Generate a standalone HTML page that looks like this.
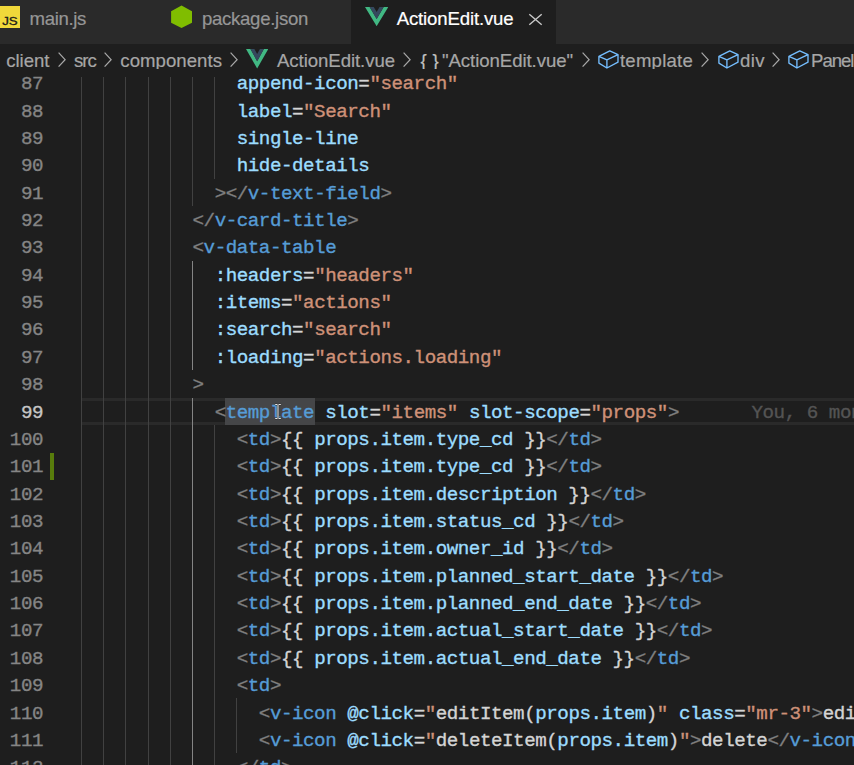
<!DOCTYPE html>
<html><head><meta charset="utf-8"><title>ActionEdit.vue</title>
<style>
html,body{margin:0;padding:0;background:#1e1e1e;}
body{width:854px;height:765px;overflow:hidden;position:relative;font-family:"Liberation Sans",sans-serif;}
#tabs{position:absolute;left:0;top:0;width:854px;height:43.6px;background:#2a2a2a;}
.tab{position:absolute;top:0;height:43.6px;background:#2a2a2a;color:#969696;font-size:18.6px;white-space:nowrap;}
.tab.active{background:#1e1e1e;color:#ffffff;}
.u{position:absolute;white-space:pre;-webkit-text-stroke:0.2px;font-size:18.6px;line-height:24px;height:24px;}
#crumbs{position:absolute;left:0;top:43px;width:854px;height:26px;background:#1e1e1e;color:#a9a9a9;white-space:nowrap;overflow:hidden;}
#code{position:absolute;left:0;top:0;width:854px;height:765px;font-family:"Liberation Mono",monospace;font-size:19.2px;overflow:hidden;-webkit-text-stroke:0.35px;}
.ln{position:absolute;left:0;width:43px;text-align:right;color:#858585;height:27.36px;line-height:27.36px;white-space:pre;letter-spacing:-0.462px;}
.ln.cur{color:#c6c6c6;}
.cl{position:absolute;left:82px;height:27.36px;line-height:27.36px;white-space:pre;color:#d4d4d4;letter-spacing:-0.462px;}
.g{position:absolute;width:1.2px;background:#414141;}
.g.act{background:#848484;}
.p{color:#808080}.t{color:#569cd6}.a{color:#9cdcfe}.s{color:#ce9178}.x{color:#d4d4d4}.e{color:#d4d4d4}
</style></head><body>
<div id="tabs">
<div class="tab" style="left:0;width:136px;"></div><div class="tab" style="left:137px;width:214px;"></div><div class="tab active" style="left:351px;width:205px;"></div>
<svg style="position:absolute;left:0;top:6px" width="20" height="22" viewBox="0 0 20 22"><rect x="0" y="0" width="20" height="22" fill="#f0d83a"/><text x="2.2" y="19" font-family="Liberation Sans, sans-serif" font-size="11" fill="#1a1a1a" stroke="#1a1a1a" stroke-width="0.3" textLength="15.5" lengthAdjust="spacingAndGlyphs">JS</text></svg><span class="u" style="left:29.50px;top:7.26px;letter-spacing:-0.345px;font-size:18.6px;color:#969696;">main.js</span><svg style="position:absolute;left:170px;top:5px" width="23" height="24" viewBox="0 0 23 24"><polygon points="11.5,0.5 22,6.2 22,17.8 11.5,23.1 1.1,17.8 1.1,6.2" fill="#80bd00"/></svg><span class="u" style="left:202.00px;top:7.26px;letter-spacing:-0.301px;font-size:18.6px;color:#969696;">package.json</span><svg style="position:absolute;left:364.8px;top:6.6px" width="23.3" height="19.2" viewBox="0 0 24 20" preserveAspectRatio="none"><polygon points="0,0 4.8,0 12,12.5 19.2,0 24,0 12,20" fill="#41b883"/><polygon points="4.8,0 9,0 12,5.2 15,0 19.2,0 12,12.5" fill="#35495e"/></svg><span class="u" style="left:396.70px;top:7.26px;letter-spacing:-0.150px;font-size:18.6px;color:#ffffff;">ActionEdit.vue</span><svg style="position:absolute;left:528px;top:12.5px" width="15" height="13" viewBox="0 0 15 13"><path d="M1.3 1.2 L13.7 11.8 M13.7 1.2 L1.3 11.8" stroke="#c8c8c8" stroke-width="1.4" fill="none"/></svg>
</div>
<div id="crumbs" style="top:0;height:69px;background:transparent;pointer-events:none">
<span class="u" style="left:6.30px;top:48.56px;letter-spacing:-0.054px;font-size:18.6px;color:#a6a6a6;">client</span><svg style="position:absolute;left:58.4px;top:52.3px" width="9" height="15.4" viewBox="0 0 9 15.4"><path d="M0.6 0.7 L7.1 7.7 L0.6 14.7" stroke="#a8a8a8" stroke-width="1.25" fill="none"/></svg><span class="u" style="left:74.00px;top:48.56px;letter-spacing:-1.031px;font-size:18.6px;color:#a6a6a6;">src</span><svg style="position:absolute;left:104.3px;top:52.3px" width="9" height="15.4" viewBox="0 0 9 15.4"><path d="M0.6 0.7 L7.1 7.7 L0.6 14.7" stroke="#a8a8a8" stroke-width="1.25" fill="none"/></svg><span class="u" style="left:120.30px;top:48.56px;letter-spacing:0.037px;font-size:18.6px;color:#a6a6a6;">components</span><svg style="position:absolute;left:230.4px;top:52.3px" width="9" height="15.4" viewBox="0 0 9 15.4"><path d="M0.6 0.7 L7.1 7.7 L0.6 14.7" stroke="#a8a8a8" stroke-width="1.25" fill="none"/></svg><svg style="position:absolute;left:246.0px;top:49.0px" width="22.3" height="19.5" viewBox="0 0 24 20" preserveAspectRatio="none"><polygon points="0,0 4.8,0 12,12.5 19.2,0 24,0 12,20" fill="#41b883"/><polygon points="4.8,0 9,0 12,5.2 15,0 19.2,0 12,12.5" fill="#35495e"/></svg><span class="u" style="left:277.00px;top:48.56px;letter-spacing:-0.064px;font-size:18.6px;color:#a6a6a6;">ActionEdit.vue</span><svg style="position:absolute;left:403.3px;top:52.3px" width="9" height="15.4" viewBox="0 0 9 15.4"><path d="M0.6 0.7 L7.1 7.7 L0.6 14.7" stroke="#a8a8a8" stroke-width="1.25" fill="none"/></svg><span class="u" style="left:420.60px;top:48.56px;letter-spacing:5.588px;font-size:18.6px;color:#c0c0c0;">{}</span><span class="u" style="left:442.00px;top:48.56px;letter-spacing:-0.069px;font-size:18.6px;color:#a6a6a6;">"ActionEdit.vue"</span><svg style="position:absolute;left:582.3px;top:52.3px" width="9" height="15.4" viewBox="0 0 9 15.4"><path d="M0.6 0.7 L7.1 7.7 L0.6 14.7" stroke="#a8a8a8" stroke-width="1.25" fill="none"/></svg><svg style="position:absolute;left:598.0px;top:49.5px" width="21" height="19" viewBox="0 0 21 19"><path d="M0.9 6.3 L11.8 0.9 L20 4.6 L20 12.2 L8.9 18 L0.9 13.1 Z M0.9 6.3 L8.9 9.8 L20 4.6 M8.9 9.8 L8.9 18" stroke="#75beff" stroke-width="1.35" fill="none" stroke-linejoin="round"/></svg><span class="u" style="left:620.00px;top:48.56px;letter-spacing:0.208px;font-size:18.6px;color:#a6a6a6;">template</span><svg style="position:absolute;left:701.2px;top:52.3px" width="9" height="15.4" viewBox="0 0 9 15.4"><path d="M0.6 0.7 L7.1 7.7 L0.6 14.7" stroke="#a8a8a8" stroke-width="1.25" fill="none"/></svg><svg style="position:absolute;left:718.0px;top:49.5px" width="21" height="19" viewBox="0 0 21 19"><path d="M0.9 6.3 L11.8 0.9 L20 4.6 L20 12.2 L8.9 18 L0.9 13.1 Z M0.9 6.3 L8.9 9.8 L20 4.6 M8.9 9.8 L8.9 18" stroke="#75beff" stroke-width="1.35" fill="none" stroke-linejoin="round"/></svg><span class="u" style="left:740.00px;top:48.56px;letter-spacing:0.408px;font-size:18.6px;color:#a6a6a6;">div</span><svg style="position:absolute;left:772.2px;top:52.3px" width="9" height="15.4" viewBox="0 0 9 15.4"><path d="M0.6 0.7 L7.1 7.7 L0.6 14.7" stroke="#a8a8a8" stroke-width="1.25" fill="none"/></svg><svg style="position:absolute;left:788.0px;top:49.5px" width="21" height="19" viewBox="0 0 21 19"><path d="M0.9 6.3 L11.8 0.9 L20 4.6 L20 12.2 L8.9 18 L0.9 13.1 Z M0.9 6.3 L8.9 9.8 L20 4.6 M8.9 9.8 L8.9 18" stroke="#75beff" stroke-width="1.35" fill="none" stroke-linejoin="round"/></svg><span class="u" style="left:811.00px;top:48.56px;letter-spacing:-1.014px;font-size:18.6px;color:#a6a6a6;">Panel</span>
</div>
<div id="code" style="top:0">
<div style="position:absolute;left:82px;top:397.7px;width:772px;height:27.2px;box-sizing:border-box;border-top:3px solid #2a2a2a;border-bottom:3px solid #2a2a2a;"></div>
<div style="position:absolute;left:225.3px;top:397.8px;width:89.5px;height:27.0px;background:#454648;"></div>
<div class="g" style="left:81.1px;top:76.5px;height:704.0px"></div>
<div class="g" style="left:103.2px;top:76.5px;height:704.0px"></div>
<div class="g" style="left:125.3px;top:76.5px;height:704.0px"></div>
<div class="g" style="left:147.5px;top:76.5px;height:704.0px"></div>
<div class="g" style="left:169.6px;top:76.5px;height:704.0px"></div>
<div class="g" style="left:191.7px;top:76.5px;height:129.4px"></div>
<div class="g" style="left:213.8px;top:76.5px;height:102.1px"></div>
<div class="g act" style="left:191.7px;top:260.7px;height:109.4px"></div>
<div class="g act" style="left:191.7px;top:397.5px;height:383.0px"></div>
<div class="g" style="left:213.8px;top:424.8px;height:355.7px"></div>
<div class="g" style="left:235.9px;top:698.4px;height:54.7px"></div>
<div style="position:absolute;left:50px;top:452.8px;width:4px;height:27.4px;background:#587c0c;"></div>
<div class="ln" style="top:71.24px">87</div><div class="cl" style="top:71.24px">              <span class="a">append-icon</span><span class="e">=</span><span class="s">"search"</span></div>
<div class="ln" style="top:98.60px">88</div><div class="cl" style="top:98.60px">              <span class="a">label</span><span class="e">=</span><span class="s">"Search"</span></div>
<div class="ln" style="top:125.96px">89</div><div class="cl" style="top:125.96px">              <span class="a">single-line</span></div>
<div class="ln" style="top:153.32px">90</div><div class="cl" style="top:153.32px">              <span class="a">hide-details</span></div>
<div class="ln" style="top:180.68px">91</div><div class="cl" style="top:180.68px">            <span class="p">&gt;&lt;/</span><span class="t">v-text-field</span><span class="p">&gt;</span></div>
<div class="ln" style="top:208.04px">92</div><div class="cl" style="top:208.04px">          <span class="p">&lt;/</span><span class="t">v-card-title</span><span class="p">&gt;</span></div>
<div class="ln" style="top:235.40px">93</div><div class="cl" style="top:235.40px">          <span class="p">&lt;</span><span class="t">v-data-table</span></div>
<div class="ln" style="top:262.76px">94</div><div class="cl" style="top:262.76px">            <span class="a">:headers</span><span class="e">=</span><span class="s">"headers"</span></div>
<div class="ln" style="top:290.12px">95</div><div class="cl" style="top:290.12px">            <span class="a">:items</span><span class="e">=</span><span class="s">"actions"</span></div>
<div class="ln" style="top:317.48px">96</div><div class="cl" style="top:317.48px">            <span class="a">:search</span><span class="e">=</span><span class="s">"search"</span></div>
<div class="ln" style="top:344.84px">97</div><div class="cl" style="top:344.84px">            <span class="a">:loading</span><span class="e">=</span><span class="s">"actions.loading"</span></div>
<div class="ln" style="top:372.20px">98</div><div class="cl" style="top:372.20px">          <span class="p">&gt;</span></div>
<div class="ln cur" style="top:399.56px">99</div><div class="cl" style="top:399.56px">            <span class="p">&lt;</span><span class="t">template</span><span class="x"> </span><span class="a">slot</span><span class="e">=</span><span class="s">"items"</span><span class="x"> </span><span class="a">slot-scope</span><span class="e">=</span><span class="s">"props"</span><span class="p">&gt;</span></div>
<div class="cl" style="top:399.56px;left:751.5px;color:#545454">You, 6 months ago</div>
<div class="ln" style="top:426.92px">100</div><div class="cl" style="top:426.92px">              <span class="p">&lt;</span><span class="t">td</span><span class="p">&gt;</span><span class="x">{{ </span><span class="a">props.item.type_cd</span><span class="x"> }}</span><span class="p">&lt;/</span><span class="t">td</span><span class="p">&gt;</span></div>
<div class="ln" style="top:454.28px">101</div><div class="cl" style="top:454.28px">              <span class="p">&lt;</span><span class="t">td</span><span class="p">&gt;</span><span class="x">{{ </span><span class="a">props.item.type_cd</span><span class="x"> }}</span><span class="p">&lt;/</span><span class="t">td</span><span class="p">&gt;</span></div>
<div class="ln" style="top:481.64px">102</div><div class="cl" style="top:481.64px">              <span class="p">&lt;</span><span class="t">td</span><span class="p">&gt;</span><span class="x">{{ </span><span class="a">props.item.description</span><span class="x"> }}</span><span class="p">&lt;/</span><span class="t">td</span><span class="p">&gt;</span></div>
<div class="ln" style="top:509.00px">103</div><div class="cl" style="top:509.00px">              <span class="p">&lt;</span><span class="t">td</span><span class="p">&gt;</span><span class="x">{{ </span><span class="a">props.item.status_cd</span><span class="x"> }}</span><span class="p">&lt;/</span><span class="t">td</span><span class="p">&gt;</span></div>
<div class="ln" style="top:536.36px">104</div><div class="cl" style="top:536.36px">              <span class="p">&lt;</span><span class="t">td</span><span class="p">&gt;</span><span class="x">{{ </span><span class="a">props.item.owner_id</span><span class="x"> }}</span><span class="p">&lt;/</span><span class="t">td</span><span class="p">&gt;</span></div>
<div class="ln" style="top:563.72px">105</div><div class="cl" style="top:563.72px">              <span class="p">&lt;</span><span class="t">td</span><span class="p">&gt;</span><span class="x">{{ </span><span class="a">props.item.planned_start_date</span><span class="x"> }}</span><span class="p">&lt;/</span><span class="t">td</span><span class="p">&gt;</span></div>
<div class="ln" style="top:591.08px">106</div><div class="cl" style="top:591.08px">              <span class="p">&lt;</span><span class="t">td</span><span class="p">&gt;</span><span class="x">{{ </span><span class="a">props.item.planned_end_date</span><span class="x"> }}</span><span class="p">&lt;/</span><span class="t">td</span><span class="p">&gt;</span></div>
<div class="ln" style="top:618.44px">107</div><div class="cl" style="top:618.44px">              <span class="p">&lt;</span><span class="t">td</span><span class="p">&gt;</span><span class="x">{{ </span><span class="a">props.item.actual_start_date</span><span class="x"> }}</span><span class="p">&lt;/</span><span class="t">td</span><span class="p">&gt;</span></div>
<div class="ln" style="top:645.80px">108</div><div class="cl" style="top:645.80px">              <span class="p">&lt;</span><span class="t">td</span><span class="p">&gt;</span><span class="x">{{ </span><span class="a">props.item.actual_end_date</span><span class="x"> }}</span><span class="p">&lt;/</span><span class="t">td</span><span class="p">&gt;</span></div>
<div class="ln" style="top:673.16px">109</div><div class="cl" style="top:673.16px">              <span class="p">&lt;</span><span class="t">td</span><span class="p">&gt;</span></div>
<div class="ln" style="top:700.52px">110</div><div class="cl" style="top:700.52px">                <span class="p">&lt;</span><span class="t">v-icon</span><span class="x"> </span><span class="a">@click</span><span class="e">=</span><span class="s">"</span><span class="x">editItem(</span><span class="a">props.item</span><span class="x">)</span><span class="s">"</span><span class="x"> </span><span class="a">class</span><span class="e">=</span><span class="s">"mr-3"</span><span class="p">&gt;</span><span class="x">edit</span></div>
<div class="ln" style="top:727.88px">111</div><div class="cl" style="top:727.88px">                <span class="p">&lt;</span><span class="t">v-icon</span><span class="x"> </span><span class="a">@click</span><span class="e">=</span><span class="s">"</span><span class="x">deleteItem(</span><span class="a">props.item</span><span class="x">)</span><span class="s">"</span><span class="p">&gt;</span><span class="x">delete</span><span class="p">&lt;/</span><span class="t">v-icon</span><span class="p">&gt;</span></div>
<div class="ln" style="top:755.24px">112</div><div class="cl" style="top:755.24px">              <span class="p">&lt;/</span><span class="t">td</span><span class="p">&gt;</span></div>
<svg style="position:absolute;left:274.4px;top:403px" width="8" height="17" viewBox="0 0 8 17"><path d="M1.2 1.5 H3.2 M4.8 1.5 H6.8 M4 1.5 V15.5 M1.2 15.5 H3.2 M4.8 15.5 H6.8" stroke="#2a2a2a" stroke-width="2.2" fill="none"/><path d="M1.2 1.5 H3.2 M4.8 1.5 H6.8 M4 1.5 V15.5 M1.2 15.5 H3.2 M4.8 15.5 H6.8" stroke="#e6e6e6" stroke-width="1.1" fill="none"/></svg>
</div>
</body></html>
